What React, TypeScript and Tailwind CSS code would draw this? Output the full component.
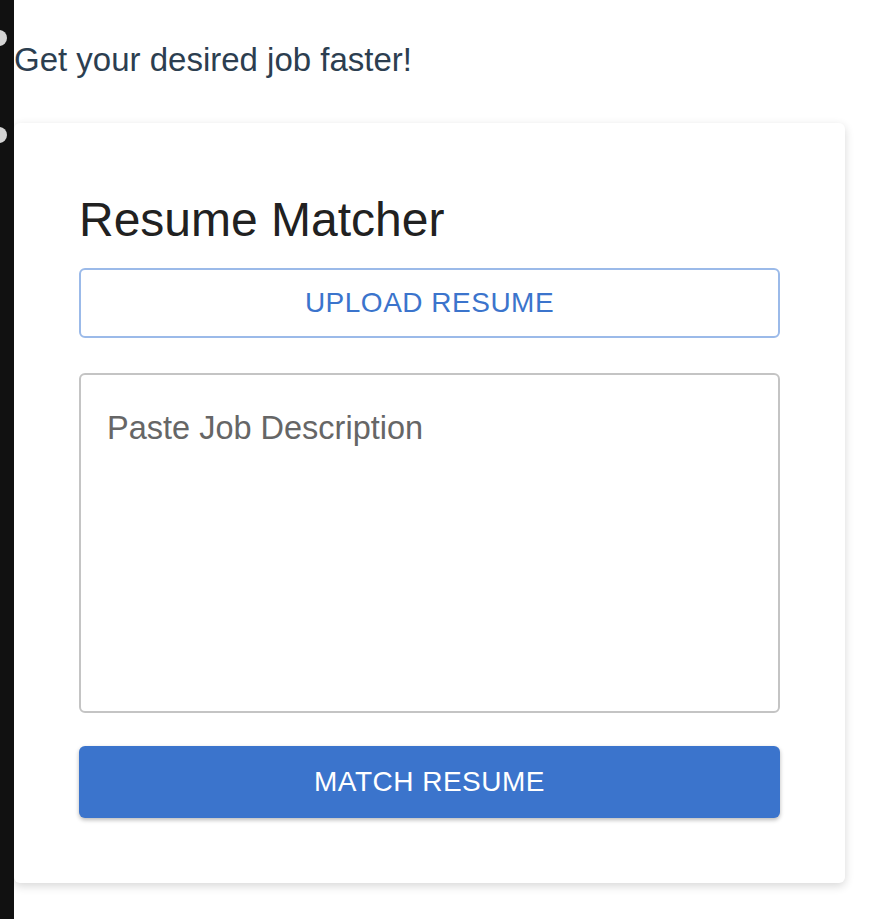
import { useState } from "react";

const font = { fontFamily: '"Liberation Sans", Arial, Helvetica, sans-serif' };

const SideBar = () => (
  <div className="relative w-[14px] shrink-0 bg-[#111111]">
    {/* window edge handles */}
    <span className="absolute left-[-9px] top-[30px] h-[16px] w-[16px] rounded-full bg-[#d4d4d4]" />
    <span className="absolute left-[-9px] top-[127px] h-[16px] w-[16px] rounded-full bg-[#d4d4d4]" />
  </div>
);

const ResumeCard = () => {
  const [jobText, setJobText] = useState("");

  return (
    <div className="w-[831px] rounded-[6px] bg-white px-[65px] pt-[73px] pb-[65px] shadow-[0_3px_10px_rgba(0,0,0,0.16)]">
      <h2 className="text-[48px] leading-[47px] text-[#212121]">Resume Matcher</h2>

      <button className="mt-[25px] flex h-[70px] w-full items-center justify-center rounded-[6px] border-2 border-[#9bbae9] bg-white text-[28px] tracking-[0.5px] text-[#3b74cc]">
        UPLOAD RESUME
      </button>

      <textarea
        value={jobText}
        onChange={(e) => setJobText(e.target.value)}
        placeholder="Paste Job Description"
        className="mt-[35px] block h-[340px] w-full resize-none rounded-[6px] border-2 border-[#c4c4c4] px-[26px] pt-[29px] text-[32.5px] leading-[48px] text-[#333] outline-none placeholder:text-[#666666]"
        style={font}
      />

      <button className="mt-[33px] flex h-[72px] w-full items-center justify-center rounded-[6px] bg-[#3b74cc] text-[28px] tracking-[0.5px] text-white shadow-[0_2px_4px_rgba(0,0,0,0.28)]">
        MATCH RESUME
      </button>
    </div>
  );
};

export default function App() {
  return (
    <div className="flex min-h-[919px] w-full bg-white" style={font}>
      <SideBar />
      <main className="flex-1 pt-[41px]">
        <h1 className="mb-[45px] text-[33px] leading-[37px] text-[#2c3e50]">Get your desired job faster!</h1>
        <ResumeCard />
      </main>
    </div>
  );
}
